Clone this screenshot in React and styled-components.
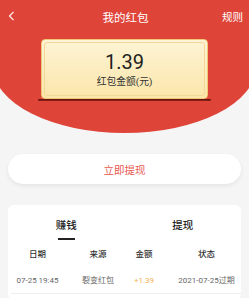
import React, { useState } from 'react';
import styled, { createGlobalStyle } from 'styled-components';

const Global = createGlobalStyle`
  body {
    margin: 0;
    background: #f5f5f5;
    font-family: Roboto, "Noto Sans CJK SC", sans-serif;
  }
`;

const Page = styled.div`
  width: 249px;
  min-height: 298px;
  overflow: hidden;
  background: #f5f5f5;
`;

const Hero = styled.div`
  margin: 0 -7px;
  height: 133px;
  background: #df4439;
  border-radius: 0 0 50% 50%;
  display: flex;
  flex-direction: column;
  align-items: center;
`;

const NavBar = styled.div`
  width: 249px;
  height: 33px;
  display: flex;
  align-items: center;
  padding: 0 6px 0 8px;
  box-sizing: border-box;
  color: #fff;
`;

const Back = styled.div`
  width: 22px;
  display: flex;
  align-items: center;
  margin-top: -1px;
`;

const Title = styled.div`
  flex: 1;
  text-align: center;
  font-size: 11.5px;
  margin-top: 1px;
`;

const Rule = styled.div`
  width: 22px;
  font-size: 10.5px;
  text-align: right;
  margin-top: -1px;
`;

const Pocket = styled.div`
  margin-top: 6px;
  display: flex;
  flex-direction: column;
  align-items: center;
`;

const Card = styled.div`
  width: 167px;
  height: 60px;
  box-sizing: border-box;
  padding: 2px;
  border: 1px solid #efc777;
  border-radius: 4px;
  background: linear-gradient(180deg, #fdf4d6 0%, #fbe6aa 100%);
`;

const CardInner = styled.div`
  height: 100%;
  box-sizing: border-box;
  border: 1px solid #f2d799;
  border-radius: 3px;
  display: flex;
  flex-direction: column;
  align-items: center;
  color: #222;
`;

const Amount = styled.div`
  font-size: 20px;
  line-height: 20px;
  margin-top: 9px;
`;

const AmountLabel = styled.div`
  font-size: 9.8px;
  line-height: 12px;
  margin-top: 4px;
  color: #333;
`;

const Slot = styled.div`
  width: 173px;
  height: 2px;
  border-radius: 1px;
  background: linear-gradient(180deg, #5a100a 0%, #8e231a 100%);
`;

const WithdrawButton = styled.button`
  display: block;
  margin: 21px 8px 0;
  width: 233px;
  height: 30px;
  border: none;
  border-radius: 15px;
  background: #fff;
  box-shadow: 0 2px 4px rgba(0, 0, 0, 0.07);
  color: #e8574f;
  font-family: inherit;
  font-size: 10.5px;
  padding: 0;
`;

const Records = styled.div`
  margin: 21px 8px 0;
  background: #fff;
  border-radius: 6px;
  padding-bottom: 6px;
`;

const TabBar = styled.div`
  display: flex;
  padding-top: 14px;
`;

const Tab = styled.div`
  flex: 1;
  display: flex;
  flex-direction: column;
  align-items: center;
  font-size: 10.5px;
  line-height: 14px;
  font-weight: 500;
  color: #222;
`;

const TabLine = styled.div`
  width: 17px;
  height: 2px;
  margin-top: 5px;
  background: ${(p) => (p.$active ? '#222' : 'transparent')};
`;

const Grid = styled.div`
  display: grid;
  grid-template-columns: 53px 68px 24px 1fr;
  margin-left: 3px;
  text-align: center;
`;

const HeadRow = styled(Grid)`
  margin-top: 9px;
  font-size: 8.5px;
  line-height: 11px;
  font-weight: 500;
  color: #333;
`;

const DataRow = styled(Grid)`
  margin-top: 14.5px;
  padding-bottom: 7px;
  font-size: 8px;
  line-height: 11px;
  color: #666;
  border-bottom: 1px solid #ededf2;
`;

const Cell = styled.div`
  white-space: nowrap;
  padding-left: ${(p) => (p.$last ? '16px' : '0')};
  color: ${(p) => p.$color || 'inherit'};
`;

const records = [
  { date: '07-25 19:45', source: '裂变红包', amount: '+1.39', status: '2021-07-25过期' },
];

export default function App() {
  const [tab, setTab] = useState(0);

  return (
    <Page>
      <Global />
      <Hero>
        <NavBar>
          <Back>
            <svg width="7" height="10" viewBox="0 0 7 10">
              <polyline points="5.5,0.8 1.5,5 5.5,9.2" fill="none" stroke="#fff" strokeWidth="1.1" />
            </svg>
          </Back>
          <Title>我的红包</Title>
          <Rule>规则</Rule>
        </NavBar>
        <Pocket>
          <Card>
            <CardInner>
              <Amount>1.39</Amount>
              <AmountLabel>红包金额(元)</AmountLabel>
            </CardInner>
          </Card>
          <Slot />
        </Pocket>
      </Hero>

      <WithdrawButton>立即提现</WithdrawButton>

      <Records>
        <TabBar>
          {['赚钱', '提现'].map((t, i) => (
            <Tab key={t} onClick={() => setTab(i)}>
              {t}
              <TabLine $active={tab === i} />
            </Tab>
          ))}
        </TabBar>
        <HeadRow>
          <Cell>日期</Cell>
          <Cell>来源</Cell>
          <Cell>金额</Cell>
          <Cell $last>状态</Cell>
        </HeadRow>
        {records.map((r) => (
          <DataRow key={r.date}>
            <Cell>{r.date}</Cell>
            <Cell>{r.source}</Cell>
            <Cell $color="#f3b257">{r.amount}</Cell>
            <Cell $last>{r.status}</Cell>
          </DataRow>
        ))}
      </Records>
    </Page>
  );
}
